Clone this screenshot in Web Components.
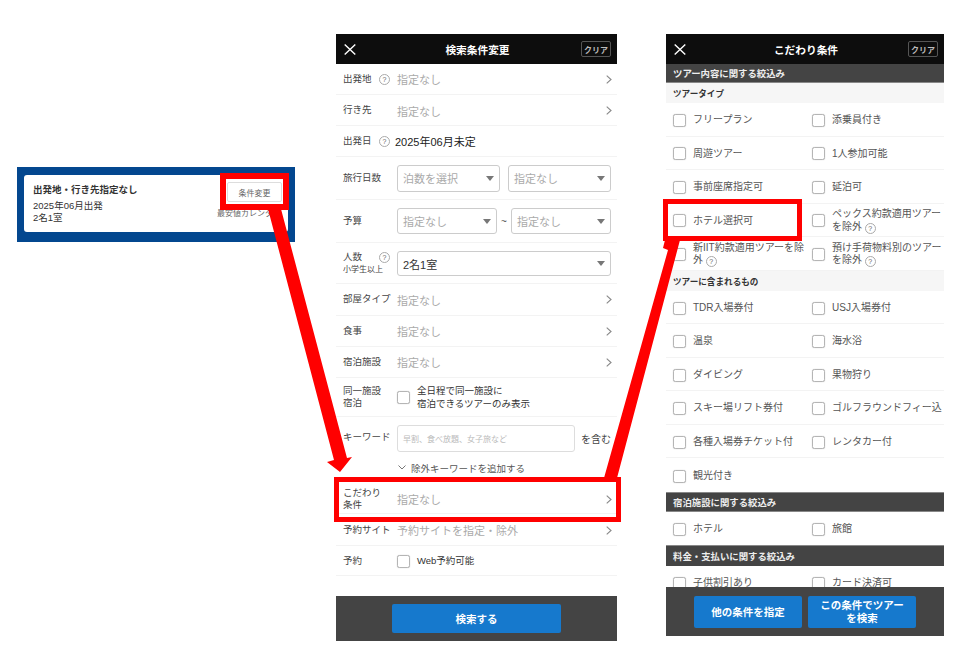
<!DOCTYPE html>
<html lang="ja">
<head>
<meta charset="utf-8">
<style>
  html, body { margin: 0; background: #fff; }
  body {
    width: 973px; height: 656px; position: relative; overflow: hidden;
    font-family: "Liberation Sans", "Noto Sans CJK JP", sans-serif;
    color: #333;
  }
  summary-card { position: absolute; left: 17px; top: 167px; }
  search-panel { position: absolute; left: 336px; top: 34px; }
  kodawari-panel { position: absolute; left: 666px; top: 34px; }
  .red-box { position: absolute; border: 5px solid #f00; box-sizing: border-box; }
  svg.arrows { position: absolute; left: 0; top: 0; }
</style>
</head>
<body>

<script>
const SVG_CLOSE = `<svg width="12" height="11" viewBox="0 0 12 11"><path d="M.7.5 11.3 10.5M11.3.5.7 10.5" stroke="#fff" stroke-width="1.4" fill="none"/></svg>`;
const SVG_CHEVRON = `<svg width="6" height="9" viewBox="0 0 6 9"><path d="M.7.7 5 4.5.7 8.3" stroke="#888" stroke-width="1.1" fill="none"/></svg>`;

class PanelHeader extends HTMLElement {
  constructor() {
    super();
    this.attachShadow({ mode: 'open' });
    this.shadowRoot.innerHTML = `
      <style>
        :host { display: grid; grid-template-columns: 1fr auto 1fr; align-items: center; height: 30px; background: #0d0d0d; color: #fff; padding: 0 6px 0 8px; flex: none; box-sizing: border-box; }
        .title { text-align: center; font-size: 10.7px; font-weight: bold; }
        .clear { justify-self: end; width: 28px; height: 14px; border: 1px solid #555; border-radius: 2px; font-size: 8px; font-weight: bold; color: #bbb; display: flex; align-items: center; justify-content: center; }
        svg { display: block; }
      </style>
      ${SVG_CLOSE}
      <div class="title"><slot></slot></div>
      <div class="clear">クリア</div>`;
  }
}
customElements.define('panel-header', PanelHeader);

class HelpMark extends HTMLElement {
  constructor() {
    super();
    this.attachShadow({ mode: 'open' });
    this.shadowRoot.innerHTML = `
      <style>
        :host { display: inline-flex; width: 9px; height: 9px; border: 1px solid #aaa; border-radius: 50%; font-size: 7px; color: #666; align-items: center; justify-content: center; vertical-align: -1px; line-height: 1; }
      </style>?`;
  }
}
customElements.define('help-mark', HelpMark);

class CheckBox extends HTMLElement {
  constructor() {
    super();
    this.attachShadow({ mode: 'open' });
    this.shadowRoot.innerHTML = `
      <style>
        :host { display: block; flex: none; width: 11px; height: 11px; border: 1px solid #b5b5b5; border-radius: 2.5px; background: #fff; box-shadow: 0 0 1px #bbb; }
      </style>`;
  }
}
customElements.define('check-box', CheckBox);

class SelectBox extends HTMLElement {
  constructor() {
    super();
    this.attachShadow({ mode: 'open' });
    this.shadowRoot.innerHTML = `
      <style>
        :host { display: flex; align-items: center; box-sizing: border-box; height: 26px; border: 1px solid #ccc; border-radius: 3px; padding: 0 5px; font-size: 11px; color: #aaa; background: #fff; }
        :host([value]) { color: #333; }
        .t { flex: 1; white-space: nowrap; }
        i { width: 0; height: 0; border: 4px solid transparent; border-top: 5px solid #777; border-bottom: 0; }
      </style>
      <span class="t"><slot></slot></span><i></i>`;
  }
}
customElements.define('select-box', SelectBox);

class FormRow extends HTMLElement {
  constructor() {
    super();
    this.attachShadow({ mode: 'open' });
    this.shadowRoot.innerHTML = `
      <style>
        :host { display: flex; align-items: center; box-sizing: border-box; border-bottom: 1px solid #f3f3f3; padding: 0 5px 0 7px; font-size: 9.5px; color: #444; }
        :host([bare]) { border-bottom: 0; }
        .label { width: 54px; flex: none; line-height: 12.5px; }
        .body { flex: 1; min-width: 0; display: flex; align-items: center; gap: 6px; font-size: 11px; color: #aaa; }
        .chev { display: none; margin-left: auto; }
        :host([link]) .chev { display: block; }
        svg { display: block; }
      </style>
      <div class="label"><slot name="label"></slot></div>
      <div class="body"><slot></slot><span class="chev">${SVG_CHEVRON}</span></div>`;
  }
}
customElements.define('form-row', FormRow);

class SummaryCard extends HTMLElement {
  constructor() {
    super();
    this.attachShadow({ mode: 'open' });
    this.shadowRoot.innerHTML = `
      <style>
        :host { display: block; box-sizing: border-box; width: 278px; height: 75px; background: #03478f; padding: 8px 7px 10px; }
        .card { position: relative; box-sizing: border-box; height: 57px; background: #fff; border-radius: 3px; padding: 8px 9px; color: #333; }
        h3 { margin: 0 0 4px; font-size: 9.5px; line-height: 13px; font-weight: bold; }
        p { margin: 0; font-size: 9.5px; line-height: 12px; }
        button { position: absolute; right: 6px; top: 7px; width: 55px; height: 20px; border: 1px solid #ddd; border-radius: 2px; background: #fff; color: #666; font: 8px "Liberation Sans", "Noto Sans CJK JP", sans-serif; padding: 0; }
        .low { position: absolute; right: 7px; top: 32px; font-size: 8px; color: #666; white-space: nowrap; }
      </style>
      <div class="card">
        <h3>出発地・行き先指定なし</h3>
        <p>2025年06月出発</p>
        <p>2名1室</p>
        <button>条件変更</button>
        <span class="low">最安値カレンダー</span>
      </div>`;
  }
}
customElements.define('summary-card', SummaryCard);

class SearchPanel extends HTMLElement {
  constructor() {
    super();
    this.attachShadow({ mode: 'open' });
    this.shadowRoot.innerHTML = `
      <style>
        :host { display: flex; flex-direction: column; width: 281px; height: 607px; background: #fff; }
        .spacer { flex: 1; }
        .sel2 { display: flex; align-items: center; width: 100%; }
        .plain { color: #222; margin-left: -2px; }
        .cb { color: #333; font-size: 9.5px; line-height: 12.5px; margin-left: 1px; padding-top: 1px; }
        .keyword { flex: 1; height: 27px; box-sizing: border-box; margin-top: 3px; border: 1px solid #ddd; border-radius: 3px; display: flex; align-items: center; padding: 0 5px; font-size: 8px; color: #bbb; white-space: nowrap; }
        .inc { font-size: 10px; color: #444; white-space: nowrap; margin: 3px 1px 0 0; }
        .lab { display: flex; align-items: center; justify-content: space-between; width: 47px; }
        .sub { font-size: 8px; display: block; line-height: 13px; white-space: nowrap; }
        .add { height: 20px; display: flex; align-items: center; gap: 5px; padding-left: 62px; padding-top: 1px; box-sizing: border-box; font-size: 9.5px; color: #555; }
        .foot { flex: none; height: 45px; background: #444; display: flex; justify-content: center; align-items: center; }
        .foot div { width: 169px; height: 29px; border-radius: 2px; background: #1679cd; color: #fff; font-size: 10.5px; font-weight: bold; display: flex; align-items: center; justify-content: center; }
      </style>
      <panel-header>検索条件変更</panel-header>
      <form-row link style="height:31px"><span slot="label" class="lab">出発地<help-mark></help-mark></span>指定なし</form-row>
      <form-row link style="height:31px;padding-top:1px"><span slot="label">行き先</span>指定なし</form-row>
      <form-row style="height:31px"><span slot="label" class="lab">出発日<help-mark></help-mark></span><span class="plain">2025年06月未定</span></form-row>
      <form-row style="height:43px">
        <span slot="label">旅行日数</span>
        <div class="sel2" style="gap:8px"><select-box style="width:103px;height:27px;flex:none">泊数を選択</select-box><select-box style="width:103px;height:27px;flex:none">指定なし</select-box></div>
      </form-row>
      <form-row style="height:43px">
        <span slot="label">予算</span>
        <div class="sel2"><select-box style="width:100px;flex:none">指定なし</select-box><span style="width:14px;text-align:center;color:#555;font-size:10px">~</span><select-box style="width:100px;flex:none">指定なし</select-box></div>
      </form-row>
      <form-row style="height:41px;padding-top:1px">
        <span slot="label"><span class="lab">人数<help-mark></help-mark></span><span class="sub">小学生以上</span></span>
        <select-box value style="width:214px;height:25px;flex:none">2名1室</select-box>
      </form-row>
      <form-row link style="height:32px"><span slot="label">部屋タイプ</span>指定なし</form-row>
      <form-row link style="height:31px"><span slot="label">食事</span>指定なし</form-row>
      <form-row link style="height:31px"><span slot="label">宿泊施設</span>指定なし</form-row>
      <form-row style="height:39px"><span slot="label">同一施設<br>宿泊</span><check-box></check-box><span class="cb">全日程で同一施設に<br>宿泊できるツアーのみ表示</span></form-row>
      <form-row bare style="height:40px"><span slot="label">キーワード</span><div class="keyword">早割、食べ放題、女子旅など</div><span class="inc">を含む</span></form-row>
      <div class="add"><svg width="8" height="5" viewBox="0 0 8 5"><path d="M.5.5 4 4 7.5.5" stroke="#777" fill="none"/></svg>除外キーワードを追加する</div>
      <form-row link style="height:37px;padding-top:8px"><span slot="label">こだわり<br>条件</span>指定なし</form-row>
      <form-row link style="height:32px;padding-top:1px"><span slot="label">予約サイト</span>予約サイトを指定・除外</form-row>
      <form-row style="height:30px;padding-top:1px"><span slot="label">予約</span><check-box></check-box><span class="cb">Web予約可能</span></form-row>
      <div class="spacer"></div>
      <div class="foot"><div>検索する</div></div>`;
  }
}
customElements.define('search-panel', SearchPanel);

class OptionCell extends HTMLElement {
  constructor() {
    super();
    this.attachShadow({ mode: 'open' });
    this.shadowRoot.innerHTML = `
      <style>
        :host { display: flex; align-items: center; gap: 7px; min-width: 0; padding: 2px 0 0 7px; font-size: 10px; line-height: 12.5px; color: #555; }
        .t { min-width: 0; }
      </style>
      <check-box></check-box><span class="t"><slot></slot></span>`;
  }
}
customElements.define('option-cell', OptionCell);

class OptionRow extends HTMLElement {
  constructor() {
    super();
    this.attachShadow({ mode: 'open' });
    this.shadowRoot.innerHTML = `
      <style>
        :host { display: grid; grid-template-columns: 139px 139px; box-sizing: border-box; height: 33.55px; border-bottom: 1px solid #f3f3f3; overflow: hidden; }
        :host([bare]) { border-bottom: 0; }
      </style>
      <slot></slot>`;
  }
}
customElements.define('option-row', OptionRow);

class SectionBar extends HTMLElement {
  constructor() {
    super();
    this.attachShadow({ mode: 'open' });
    this.shadowRoot.innerHTML = `
      <style>
        :host { display: flex; align-items: center; flex: none; box-sizing: border-box; height: 20px; padding-left: 7px; background: #444; color: #eee; font-size: 9.4px; font-weight: bold; }
        :host([light]) { background: #f6f6f6; color: #333; font-size: 8.6px; }
      </style>
      <slot></slot>`;
  }
}
customElements.define('section-bar', SectionBar);

class KodawariPanel extends HTMLElement {
  constructor() {
    super();
    const row = (a, b) => `<option-row><option-cell>${a}</option-cell>${b ? `<option-cell>${b}</option-cell>` : ''}</option-row>`;
    const q = '<help-mark></help-mark>';
    this.attachShadow({ mode: 'open' });
    this.shadowRoot.innerHTML = `
      <style>
        :host { display: flex; flex-direction: column; width: 278px; height: 602px; background: #fff; position: relative; overflow: hidden; }
        .foot { position: absolute; left: 0; right: 0; bottom: 0; height: 49px; background: #444; display: flex; justify-content: center; align-items: flex-start; gap: 6px; padding-top: 9px; box-sizing: border-box; }
        .foot div { width: 108px; height: 32px; box-sizing: border-box; border-radius: 2px; background: #1679cd; color: #fff; font-size: 10.5px; line-height: 13px; font-weight: bold; display: flex; align-items: center; justify-content: center; text-align: center; padding: 0 8px; }
      </style>
      <panel-header>こだわり条件</panel-header>
      <section-bar style="height:19px;border-bottom:1px solid #888">ツアー内容に関する絞込み</section-bar>
      <section-bar light>ツアータイプ</section-bar>
      ${row('フリープラン', '添乗員付き')}
      ${row('周遊ツアー', '1人参加可能')}
      ${row('事前座席指定可', '延泊可')}
      ${row('ホテル選択可', `ペックス約款適用ツアーを除外 ${q}`)}
      ${row(`新IIT約款適用ツアーを除外 ${q}`, `預け手荷物料別のツアーを除外 ${q}`)}
      <section-bar light>ツアーに含まれるもの</section-bar>
      ${row('TDR入場券付', 'USJ入場券付')}
      ${row('温泉', '海水浴')}
      ${row('ダイビング', '果物狩り')}
      ${row('スキー場リフト券付', 'ゴルフラウンドフィー込')}
      ${row('各種入場券チケット付', 'レンタカー付')}
      <option-row bare>${'<option-cell>観光付き</option-cell>'}</option-row>
      <section-bar style="border-top:1px solid #888;border-bottom:1px solid #888">宿泊施設に関する絞込み</section-bar>
      <option-row bare style="height:33px"><option-cell>ホテル</option-cell><option-cell>旅館</option-cell></option-row>
      <section-bar style="height:21px;border-top:1px solid #888">料金・支払いに関する絞込み</section-bar>
      ${row('子供割引あり', 'カード決済可')}
      <div class="foot"><div>他の条件を指定</div><div>この条件でツアーを検索</div></div>`;
  }
}
customElements.define('kodawari-panel', KodawariPanel);
</script>

<summary-card></summary-card>
<search-panel></search-panel>
<kodawari-panel></kodawari-panel>

<svg class="arrows" width="973" height="656" viewBox="0 0 973 656">
  <polygon fill="#f00" points="268,209 281,209 347,458 352,457 340,472 327,462 334,460"/>
  <polygon fill="#f00" points="604,478 617,478 680,240 665,240 663,248 668,250"/>
</svg>

<div class="red-box" style="left:220px;top:173px;width:69px;height:37px;border-width:6px"></div>
<div class="red-box" style="left:334px;top:477px;width:287px;height:45px"></div>
<div class="red-box" style="left:663px;top:199px;width:139px;height:42px"></div>
</body>
</html>
